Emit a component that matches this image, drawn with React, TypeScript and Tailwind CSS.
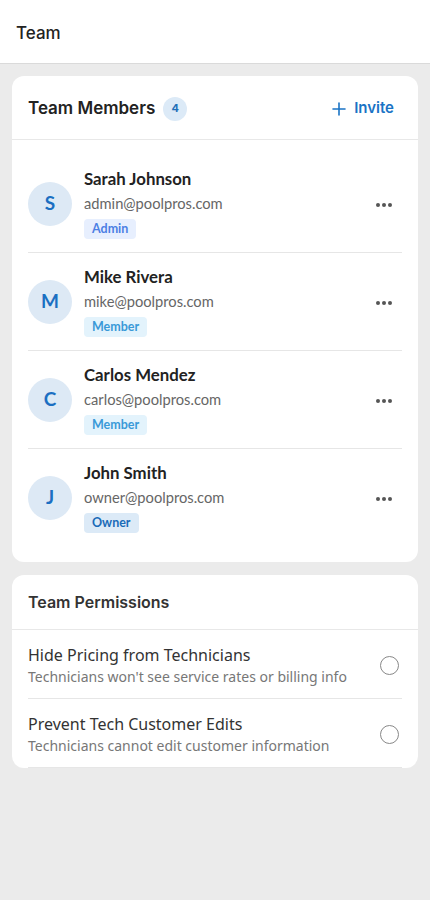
import React, { useState } from 'react';

type Role = 'Admin' | 'Member' | 'Owner';

const members: { name: string; email: string; role: Role }[] = [
  { name: 'Sarah Johnson', email: 'admin@poolpros.com', role: 'Admin' },
  { name: 'Mike Rivera', email: 'mike@poolpros.com', role: 'Member' },
  { name: 'Carlos Mendez', email: 'carlos@poolpros.com', role: 'Member' },
  { name: 'John Smith', email: 'owner@poolpros.com', role: 'Owner' },
];

const roleStyles: Record<Role, string> = {
  Admin: 'bg-[#e7effe] text-[#4c7fe4]',
  Member: 'bg-[#e3f3fc] text-[#3a9ad8]',
  Owner: 'bg-[#dceaf7] text-[#1a6bb8]',
};

const permissions = [
  { id: 'pricing', title: 'Hide Pricing from Technicians', desc: "Technicians won't see service rates or billing info" },
  { id: 'edits', title: 'Prevent Tech Customer Edits', desc: 'Technicians cannot edit customer information' },
];

const heading = "font-['Inter',sans-serif]";
const body = "font-['Lato',sans-serif]";
const perm = "font-['Noto_Sans',sans-serif]";

export default function App() {
  const [enabled, setEnabled] = useState<Record<string, boolean>>({});

  return (
    <div className="min-h-[900px] bg-[#ebebeb]">
      {/* Top bar */}
      <div className="h-16 pt-[5px] bg-white border-b border-[#dadada] flex items-center px-4">
        <h1 className={`${heading} text-[17px] font-medium text-[#222]`}>Team</h1>
      </div>

      <div className="px-3 pt-3 space-y-[13px]">
        {/* Team Members */}
        <div className="bg-white rounded-xl overflow-hidden">
          <div className="h-[64px] pt-[2px] border-b border-[#e8e8e8] flex items-center justify-between px-4">
            <div className="flex items-center gap-2">
              <h2 className={`${heading} text-[17px] font-semibold text-[#222]`}>Team Members</h2>
              <span className={`${heading} w-6 h-6 rounded-full bg-[#dceaf7] text-[#1f6fb8] text-[11px] font-bold flex items-center justify-center`}>
                4
              </span>
            </div>
            <button className={`${heading} flex items-center gap-2 pr-2 text-[15px] font-semibold text-[#1a73c5]`}>
              <svg width="14" height="14" viewBox="0 0 14 14" fill="none" stroke="currentColor" strokeWidth="1.6" strokeLinecap="round">
                <path d="M7 1v12M1 7h12" />
              </svg>
              Invite
            </button>
          </div>

          <div className="px-4 pt-[15px] pb-4">
            {members.map((m, i) => (
              <div
                key={m.email}
                className={`flex items-center py-[13px] ${i < members.length - 1 ? 'border-b border-[#e6e6e6]' : ''}`}
              >
                <div className={`${body} w-11 h-11 rounded-full bg-[#dde9f5] text-[#1b6fc2] text-[19px] font-bold flex items-center justify-center shrink-0`}>
                  {m.name[0]}
                </div>
                <div className={`${body} ml-3 flex-1 min-w-0`}>
                  <p className="text-[16.8px] leading-[22px] font-bold text-[#222]">{m.name}</p>
                  <p className="mt-[3px] text-[14.7px] leading-5 text-[#666]">{m.email}</p>
                  <span className={`mt-[6px] inline-flex items-center h-5 px-[8px] rounded text-[12.5px] font-bold ${roleStyles[m.role]}`}>
                    {m.role}
                  </span>
                </div>
                <button className="flex items-center gap-[2px] mr-[10px] mt-[2px]" aria-label="More">
                  <span className="w-1 h-1 rounded-full bg-[#555]" />
                  <span className="w-1 h-1 rounded-full bg-[#555]" />
                  <span className="w-1 h-1 rounded-full bg-[#555]" />
                </button>
              </div>
            ))}
          </div>
        </div>

        {/* Team Permissions */}
        <div className="bg-white rounded-xl overflow-hidden">
          <div className="h-[55px] border-b border-[#e8e8e8] flex items-center px-4">
            <h2 className={`${heading} text-[16px] font-semibold text-[#333]`}>Team Permissions</h2>
          </div>
          <div className="px-4">
            {permissions.map((p) => (
              <div key={p.id} className="flex items-center justify-between pt-[14px] pb-[11px] border-b border-[#e6e6e6]">
                <div className={perm}>
                  <p className="text-[16px] leading-[22px] text-[#333]">{p.title}</p>
                  <p className="mt-[1px] text-[14px] leading-5 text-[#777]">{p.desc}</p>
                </div>
                <button
                  onClick={() => setEnabled({ ...enabled, [p.id]: !enabled[p.id] })}
                  className={`w-[19px] h-[19px] mr-[3px] rounded-full border-[1.5px] ${enabled[p.id] ? 'border-[#1a73c5] bg-[#1a73c5]' : 'border-[#888]'}`}
                  aria-label={p.title}
                />
              </div>
            ))}
          </div>
        </div>
      </div>
    </div>
  );
}
